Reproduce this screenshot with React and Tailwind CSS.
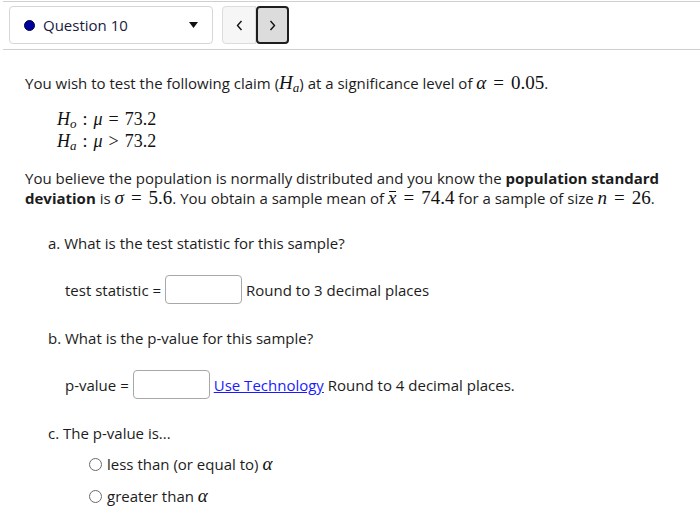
import React from 'react';

const body = { fontFamily: '"Open Sans", "Liberation Sans", sans-serif' };
const serif = { fontFamily: '"Liberation Serif", "DejaVu Serif", serif' };

// small helpers for the math bits, rendered in a serif like MathJax output
const M = ({ children }) => (
  <span className="text-[19px] leading-none text-[#111]" style={serif}>
    {children}
  </span>
);
const I = ({ children }) => <span className="italic">{children}</span>;
const Op = ({ children }) => <span className="mx-[6px]">{children}</span>;
const Rel = ({ children }) => <span className="mx-[7px]">{children}</span>;
const Sub = ({ children }) => <sub className="text-[13px] italic">{children}</sub>;
const XBar = () => (
  <span className="relative italic inline-block">
    x
    <span className="absolute left-[1px] right-0 top-[3px] h-px bg-[#111]" />
  </span>
);

const Radio = ({ children }) => (
  <label className="flex items-center h-5 ml-[41px]">
    <span className="w-[13px] h-[13px] rounded-full border border-[#6b6b6b] bg-white shrink-0" />
    <span className="ml-[5px]">{children}</span>
  </label>
);

const Field = ({ label, children }) => (
  <div className="flex items-center ml-[17px] h-[29px]">
    <span>{label}</span>
    <span className="ml-1 w-[77px] h-[29px] border border-[#a8a8a8] rounded-[4px] bg-white" />
    <span className="ml-1">{children}</span>
  </div>
);

export default function App() {
  return (
    <div className="w-[700px] h-[522px] bg-white text-[15px] leading-5 text-[#1c1c1c] overflow-hidden" style={body}>
      {/* question nav bar */}
      <div className="mt-px ml-[3px] border-t border-b border-[#cfcfcf] pt-1 pb-[5px] flex items-center">
        <div className="ml-[6px] w-[204px] h-[38px] border border-[#d6d6d6] rounded-[4px] flex items-center px-[14px]">
          <span className="w-[11px] h-[11px] rounded-full bg-[#00009a] border border-[#00004a]" />
          <span className="ml-[8px] text-[#1a1a40]">Question 10</span>
          <svg className="ml-auto" width="9" height="6" viewBox="0 0 9 6">
            <polygon points="0,0 9,0 4.5,6" fill="#111" />
          </svg>
        </div>
        <div className="ml-[9px] flex">
          <div className="w-[34px] h-[38px] bg-[#f6f6f6] border border-[#dcdcdc] rounded-l-[4px] flex items-center justify-center">
            <svg width="7" height="11" viewBox="0 0 7 11">
              <polyline points="5.5,1 1.5,5.5 5.5,10" fill="none" stroke="#111" strokeWidth="1.4" />
            </svg>
          </div>
          <div className="w-[33px] h-[38px] bg-[#dcdcdc] border-2 border-[#1e1e1e] rounded-[4px] flex items-center justify-center">
            <svg width="7" height="11" viewBox="0 0 7 11">
              <polyline points="1.5,1 5.5,5.5 1.5,10" fill="none" stroke="#111" strokeWidth="1.4" />
            </svg>
          </div>
        </div>
      </div>

      <div className="pl-[25px] pr-3">
        <p className="mt-[23px]">
          You wish to test the following claim (<M><I>H</I><Sub>a</Sub></M>) at a significance level of <M><I>α</I><Rel>=</Rel>0.05</M>.
        </p>

        <div className="mt-[15px] ml-[32px] text-[18px] leading-[22px] text-[#111]" style={serif}>
          <div><I>H</I><Sub>o</Sub><Op>:</Op><I>μ</I><Op>=</Op>73.2</div>
          <div><I>H</I><Sub>a</Sub><Op>:</Op><I>μ</I><Op>&gt;</Op>73.2</div>
        </div>

        <p className="mt-[16px]">
          You believe the population is normally distributed and you know the <b>population standard deviation</b> is <M><I>σ</I><Rel>=</Rel>5.6</M>. You obtain a sample mean of <M><XBar /><Rel>=</Rel>74.4</M> for a sample of size <M><I>n</I><Rel>=</Rel>26</M>.
        </p>

        <div className="ml-[23px]">
          <p className="mt-[25px]">a. What is the test statistic for this sample?</p>
          <div className="mt-[22px]">
            <Field label="test statistic =">Round to 3 decimal places</Field>
          </div>

          <p className="mt-[24px]">b. What is the p-value for this sample?</p>
          <div className="mt-[22px]">
            <Field label="p-value =">
              <a className="text-[#1a1aff] underline">Use Technology</a> Round to 4 decimal places.
            </Field>
          </div>

          <p className="mt-[24px]">c. The p-value is...</p>
          <div className="mt-[11px] flex flex-col gap-[12px]">
            <Radio>less than (or equal to) <M><I>α</I></M></Radio>
            <Radio>greater than <M><I>α</I></M></Radio>
          </div>
        </div>
      </div>
    </div>
  );
}
